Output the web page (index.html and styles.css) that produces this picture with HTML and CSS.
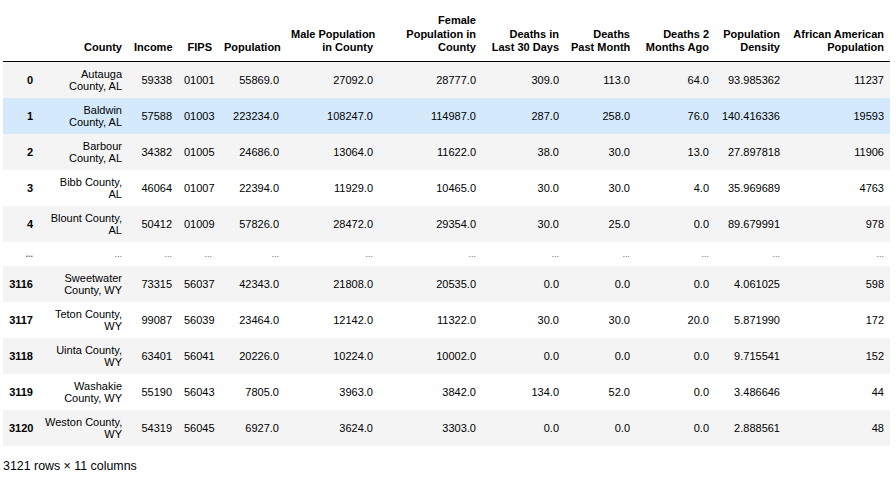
FILE: index.html
```html
<!DOCTYPE html>
<html>
<head>
<meta charset="utf-8">
<link rel="stylesheet" href="styles.css">
</head>
<body>
<div class="output">
<table class="dataframe">
  <colgroup>
    <col class="c-idx"><col class="c-county"><col class="c-income"><col class="c-fips"><col class="c-pop"><col class="c-male"><col class="c-female"><col class="c-d30"><col class="c-dpm"><col class="c-d2"><col class="c-dens"><col class="c-afam">
  </colgroup>
  <thead>
    <tr>
      <th></th>
      <th>County</th>
      <th>Income</th>
      <th>FIPS</th>
      <th>Population</th>
      <th>Male Population<br>in County</th>
      <th>Female<br>Population in<br>County</th>
      <th>Deaths in<br>Last 30 Days</th>
      <th>Deaths<br>Past Month</th>
      <th>Deaths 2<br>Months Ago</th>
      <th>Population<br>Density</th>
      <th>African American<br>Population</th>
    </tr>
  </thead>
  <tbody>
    <tr><th>0</th><td>Autauga<br>County, AL</td><td>59338</td><td>01001</td><td>55869.0</td><td>27092.0</td><td>28777.0</td><td>309.0</td><td>113.0</td><td>64.0</td><td>93.985362</td><td>11237</td></tr>
    <tr class="hover"><th>1</th><td>Baldwin<br>County, AL</td><td>57588</td><td>01003</td><td>223234.0</td><td>108247.0</td><td>114987.0</td><td>287.0</td><td>258.0</td><td>76.0</td><td>140.416336</td><td>19593</td></tr>
    <tr><th>2</th><td>Barbour<br>County, AL</td><td>34382</td><td>01005</td><td>24686.0</td><td>13064.0</td><td>11622.0</td><td>38.0</td><td>30.0</td><td>13.0</td><td>27.897818</td><td>11906</td></tr>
    <tr><th>3</th><td>Bibb County,<br>AL</td><td>46064</td><td>01007</td><td>22394.0</td><td>11929.0</td><td>10465.0</td><td>30.0</td><td>30.0</td><td>4.0</td><td>35.969689</td><td>4763</td></tr>
    <tr><th>4</th><td>Blount County,<br>AL</td><td>50412</td><td>01009</td><td>57826.0</td><td>28472.0</td><td>29354.0</td><td>30.0</td><td>25.0</td><td>0.0</td><td>89.679991</td><td>978</td></tr>
    <tr class="ellipsis"><th>...</th><td>...</td><td>...</td><td>...</td><td>...</td><td>...</td><td>...</td><td>...</td><td>...</td><td>...</td><td>...</td><td>...</td></tr>
    <tr><th>3116</th><td>Sweetwater<br>County, WY</td><td>73315</td><td>56037</td><td>42343.0</td><td>21808.0</td><td>20535.0</td><td>0.0</td><td>0.0</td><td>0.0</td><td>4.061025</td><td>598</td></tr>
    <tr><th>3117</th><td>Teton County,<br>WY</td><td>99087</td><td>56039</td><td>23464.0</td><td>12142.0</td><td>11322.0</td><td>30.0</td><td>30.0</td><td>20.0</td><td>5.871990</td><td>172</td></tr>
    <tr><th>3118</th><td>Uinta County,<br>WY</td><td>63401</td><td>56041</td><td>20226.0</td><td>10224.0</td><td>10002.0</td><td>0.0</td><td>0.0</td><td>0.0</td><td>9.715541</td><td>152</td></tr>
    <tr><th>3119</th><td>Washakie<br>County, WY</td><td>55190</td><td>56043</td><td>7805.0</td><td>3963.0</td><td>3842.0</td><td>134.0</td><td>52.0</td><td>0.0</td><td>3.486646</td><td>44</td></tr>
    <tr><th>3120</th><td>Weston County,<br>WY</td><td>54319</td><td>56045</td><td>6927.0</td><td>3624.0</td><td>3303.0</td><td>0.0</td><td>0.0</td><td>0.0</td><td>2.888561</td><td>48</td></tr>
  </tbody>
</table>
<p class="shape">3121 rows × 11 columns</p>
</div>
</body>
</html>
```

FILE: styles.css
```css
html, body {
  margin: 0;
  padding: 0;
  background: #ffffff;
}

body {
  font-family: "Liberation Sans", Arial, Helvetica, sans-serif;
  color: #000000;
}

.output {
  padding: 8px 3px 0 3px;
}

.dataframe {
  border-collapse: collapse;
  border-spacing: 0;
  table-layout: fixed;
  width: 887px;
  font-size: 11px;
  color: #000000;
}

.c-idx { width: 36px; }
.c-county { width: 89px; }
.c-income { width: 50px; }
.c-fips { width: 40px; }
.c-pop { width: 67px; }
.c-male { width: 94px; }
.c-female { width: 103px; }
.c-d30 { width: 83px; }
.c-dpm { width: 71px; }
.c-d2 { width: 79px; }
.c-dens { width: 71px; }
.c-afam { width: 104px; }

.dataframe th,
.dataframe td {
  padding: 6px 6px;
  text-align: right;
  vertical-align: middle;
  white-space: nowrap;
  border: none;
}

.dataframe thead {
  border-bottom: 1px solid #000000;
}

.dataframe thead th {
  vertical-align: bottom;
  font-weight: bold;
  line-height: 13.5px;
  padding-bottom: 6px;
}

.dataframe tbody th,
.dataframe tbody td {
  line-height: 12px;
}

.dataframe tbody th {
  font-weight: bold;
}

.dataframe tbody tr:nth-child(odd) {
  background: #f4f4f4;
}

.dataframe tbody tr.hover {
  background: #d4eafc;
}

.dataframe tbody tr.ellipsis th,
.dataframe tbody tr.ellipsis td {
  color: #666666;
  font-size: 9px;
}

.shape {
  margin: 13px 0 0 0;
  font-size: 12.4px;
  line-height: 15px;
}
```
